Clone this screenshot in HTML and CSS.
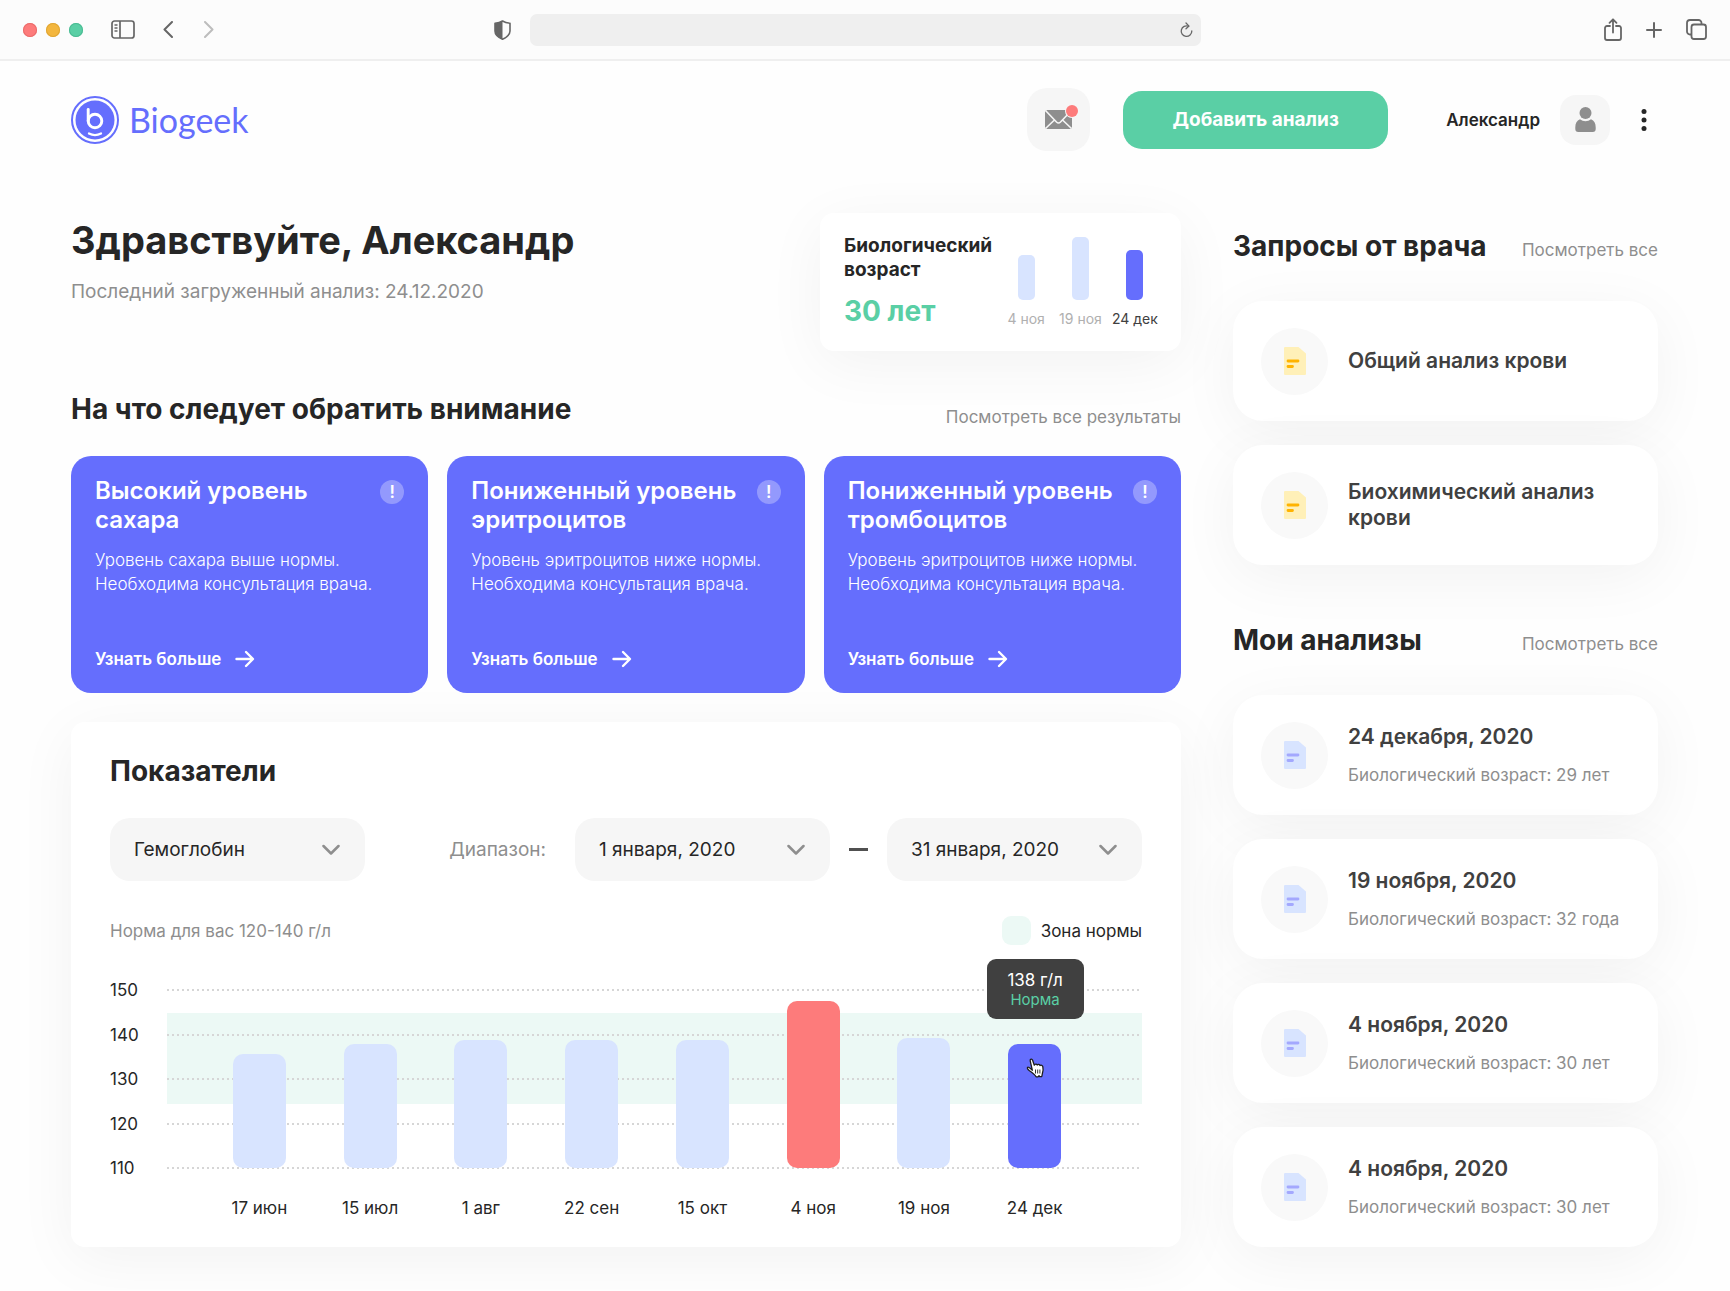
FILE: index.html
```html
<!DOCTYPE html>
<html lang="ru">
<head>
<meta charset="utf-8">
<meta name="viewport" content="width=device-width, initial-scale=1">
<title>Biogeek</title>
<link rel="stylesheet" href="styles.css">
</head>
<body>
<svg class="sprite" aria-hidden="true">
  <symbol id="i-doc" viewBox="0 0 22 28">
    <path class="doc-sheet" d="M1 0H14.500L22 6.500V27a1 1 0 0 1-1 1H1a1 1 0 0 1-1-1V1a1 1 0 0 1 1-1z"/>
    <path class="doc-lines" d="M4 14h10M4 19.500h4.500" fill="none" stroke-width="2.800" stroke-linecap="round"/>
  </symbol>
  <symbol id="i-arrow" viewBox="0 0 20 18">
    <path d="M1.500 9h16M11 2l7 7-7 7" fill="none" stroke="currentColor" stroke-width="2.400" stroke-linecap="round" stroke-linejoin="round"/>
  </symbol>
  <symbol id="i-down" viewBox="0 0 18 12">
    <path d="M1.500 2L9 9.500 16.500 2" fill="none" stroke="currentColor" stroke-width="2.500" stroke-linecap="round" stroke-linejoin="round"/>
  </symbol>
</svg>

<div class="browser">
  <div class="browser-side">
    <div class="lights"><span class="light red"></span><span class="light amber"></span><span class="light green"></span></div>
    <button class="tool sidebar-toggle" type="button" aria-label="Боковая панель">
      <svg width="24" height="19" viewBox="0 0 24 19" fill="none" stroke="currentColor" stroke-width="1.700"><rect x="1" y="1" width="22" height="17" rx="2.500"/><path d="M9 1v17"/><path d="M3.500 5h3M3.500 8h3M3.500 11h3" stroke-width="1.300"/></svg>
    </button>
    <button class="tool back" type="button" aria-label="Назад">
      <svg width="10" height="17" viewBox="0 0 10 17" fill="none" stroke="currentColor" stroke-width="2" stroke-linecap="round" stroke-linejoin="round"><path d="M9 1L1.500 8.500 9 16"/></svg>
    </button>
    <button class="tool forward" type="button" aria-label="Вперёд">
      <svg width="10" height="17" viewBox="0 0 10 17" fill="none" stroke="currentColor" stroke-width="2" stroke-linecap="round" stroke-linejoin="round"><path d="M1 1l7.500 7.500L1 16"/></svg>
    </button>
    <button class="tool shield" type="button" aria-label="Защита">
      <svg width="17" height="20" viewBox="0 0 17 20"><path d="M8.500 1c2 1.300 4.500 2 7.500 2.200V11c0 4-3.500 6.500-7.500 8.200C4.500 17.500 1 15 1 11V3.200C4 3 6.500 2.300 8.500 1z" fill="none" stroke="currentColor" stroke-width="1.600" stroke-linejoin="round"/><path d="M8.500 1v18.200C4.500 17.500 1 15 1 11V3.200C4 3 6.500 2.300 8.500 1z" fill="currentColor"/></svg>
    </button>
  </div>
  <div class="address">
    <input class="address-input" type="text" aria-label="Адрес">
    <button class="tool" type="button" aria-label="Обновить">
      <svg width="13" height="16" viewBox="0 0 13 16" fill="none" stroke="currentColor" stroke-width="1.300" stroke-linecap="round" stroke-linejoin="round"><path d="M8.500 4.200A5.300 5.300 0 1 0 11.800 9"/><path d="M6 1l3 3.100L6 6.800"/></svg>
    </button>
  </div>
  <div class="browser-side browser-end">
    <button class="tool" type="button" aria-label="Поделиться">
      <svg width="18" height="23" viewBox="0 0 18 23" fill="none" stroke="currentColor" stroke-width="1.800" stroke-linecap="round" stroke-linejoin="round"><path d="M6 8H3a2 2 0 0 0-2 2v10a2 2 0 0 0 2 2h12a2 2 0 0 0 2-2V10a2 2 0 0 0-2-2h-3"/><path d="M9 14.500V1.500M5.500 4.800L9 1.300l3.500 3.500"/></svg>
    </button>
    <button class="tool" type="button" aria-label="Новая вкладка">
      <svg width="16" height="16" viewBox="0 0 16 16" fill="none" stroke="currentColor" stroke-width="2" stroke-linecap="round"><path d="M8 1v14M1 8h14"/></svg>
    </button>
    <button class="tool" type="button" aria-label="Вкладки">
      <svg width="21" height="21" viewBox="0 0 21 21" fill="none" stroke="currentColor" stroke-width="1.800"><rect x="5.500" y="5.500" width="14.500" height="14.500" rx="2.500"/><path d="M5.500 15.500H4a3 3 0 0 1-3-3V4a3 3 0 0 1 3-3h8.500a3 3 0 0 1 3 3v1.500"/></svg>
    </button>
  </div>
</div>

<div class="page">
  <header class="header">
    <a class="brand" href="#">
      <svg width="48" height="48" viewBox="0 0 48 48" aria-hidden="true"><circle cx="24" cy="24" r="23" fill="none" stroke="#656efd" stroke-width="2"/><circle cx="24" cy="24" r="19.500" fill="#656efd"/><g fill="none" stroke="#fff" stroke-width="2.900" stroke-linecap="round"><path d="M17.200 13.500V25"/><circle cx="24" cy="25" r="6.800"/><path d="M18 37.500c3.500 1.800 8.500 1.800 12 0" stroke-width="2.300"/></g></svg>
      <span class="brand-name">Biogeek</span>
    </a>
    <button class="mail" type="button" aria-label="Сообщения">
      <svg width="41" height="35" viewBox="0 0 41 35" aria-hidden="true"><rect x="7" y="8" width="27" height="19" rx="2.500" fill="#8e8e8e"/><path d="M7.500 8.500l11 11.500q2 2 4 0l11-11.500M7.500 26.500l9.500-9M33.500 26.500l-9.500-9" fill="none" stroke="#f6f6f6" stroke-width="1.600"/><circle cx="34" cy="9" r="7" fill="#f6f6f6"/><circle cx="34" cy="9" r="6" fill="#fd7b7b"/></svg>
    </button>
    <button class="add" type="button">Добавить анализ</button>
    <span class="user-name">Александр</span>
    <a class="avatar" href="#" aria-label="Профиль">
      <svg width="21" height="25" viewBox="0 0 21 25" fill="#8e8e8e" aria-hidden="true"><circle cx="10.500" cy="6" r="6"/><path d="M5 12.300c3 2.600 8 2.600 11 0 3.200 1.200 4.700 4.200 4.700 8V22a3 3 0 0 1-3 3H3.300a3 3 0 0 1-3-3v-1.700c0-3.800 1.500-6.800 4.700-8z"/></svg>
    </a>
    <button class="more" type="button" aria-label="Меню">
      <svg width="6" height="22" viewBox="0 0 6 22" fill="#262626" aria-hidden="true"><circle cx="3" cy="2.600" r="2.500"/><circle cx="3" cy="11" r="2.500"/><circle cx="3" cy="19.400" r="2.500"/></svg>
    </button>
  </header>

  <div class="columns">
    <main class="main">
      <section class="intro">
        <div class="greeting">
          <h1>Здравствуйте, Александр</h1>
          <p>Последний загруженный анализ: 24.12.2020</p>
        </div>
        <div class="age-card">
          <div class="age-info">
            <h3>Биологический возраст</h3>
            <strong class="age-value">30 лет</strong>
          </div>
          <ul class="age-chart">
            <li><span class="age-bar" style="height:45px"></span><span>4 ноя</span></li>
            <li><span class="age-bar" style="height:63px"></span><span>19 ноя</span></li>
            <li class="current"><span class="age-bar" style="height:50px"></span><span>24 дек</span></li>
          </ul>
        </div>
      </section>

      <section class="attention">
        <div class="section-head">
          <h2>На что следует обратить внимание</h2>
          <a class="see-all" href="#">Посмотреть все результаты</a>
        </div>
        <div class="alerts">
          <article class="alert">
            <div class="alert-head"><h3>Высокий уровень сахара</h3><span class="alert-mark">!</span></div>
            <p>Уровень сахара выше нормы. Необходима консультация врача.</p>
            <a class="alert-link" href="#">Узнать больше <svg width="20" height="18"><use href="#i-arrow"/></svg></a>
          </article>
          <article class="alert">
            <div class="alert-head"><h3>Пониженный уровень эритроцитов</h3><span class="alert-mark">!</span></div>
            <p>Уровень эритроцитов ниже нормы. Необходима консультация врача.</p>
            <a class="alert-link" href="#">Узнать больше <svg width="20" height="18"><use href="#i-arrow"/></svg></a>
          </article>
          <article class="alert">
            <div class="alert-head"><h3>Пониженный уровень тромбоцитов</h3><span class="alert-mark">!</span></div>
            <p>Уровень эритроцитов ниже нормы. Необходима консультация врача.</p>
            <a class="alert-link" href="#">Узнать больше <svg width="20" height="18"><use href="#i-arrow"/></svg></a>
          </article>
        </div>
      </section>

      <section class="metrics">
        <h2>Показатели</h2>
        <form class="filters">
          <div class="picker">
            <select aria-label="Показатель"><option>Гемоглобин</option></select>
            <svg width="18" height="12"><use href="#i-down"/></svg>
          </div>
          <label class="range-label" for="from">Диапазон:</label>
          <div class="picker">
            <select id="from"><option>1 января, 2020</option></select>
            <svg width="18" height="12"><use href="#i-down"/></svg>
          </div>
          <span class="range-dash"></span>
          <div class="picker">
            <select aria-label="Конец диапазона"><option>31 января, 2020</option></select>
            <svg width="18" height="12"><use href="#i-down"/></svg>
          </div>
        </form>
        <div class="norm">
          <span class="norm-text">Норма для вас 120-140 г/л</span>
          <span class="norm-swatch"></span>
          <span>Зона нормы</span>
        </div>
        <div class="chart">
          <div class="zone"></div>
          <ul class="scale">
            <li>150</li><li>140</li><li>130</li><li>120</li><li>110</li>
          </ul>
          <div class="bars">
            <div class="bar" style="height:64%"></div>
            <div class="bar" style="height:69.5%"></div>
            <div class="bar" style="height:72%"></div>
            <div class="bar" style="height:72%"></div>
            <div class="bar" style="height:72%"></div>
            <div class="bar high" style="height:94%"></div>
            <div class="bar" style="height:73%"></div>
            <div class="bar active" style="height:69.5%">
              <div class="tooltip"><span>138 г/л</span><span class="tooltip-note">Норма</span></div>
              <svg class="pointer" width="19" height="20" viewBox="0 0 19 20" aria-hidden="true"><path d="M6.300 12.200L4.200 2.800C3.900 1 6 .5 6.600 2.200L8.300 7.200C8.800 5.800 10.700 5.700 11.200 7c.8-1 2.400-.8 2.800.6 1-.8 2.500-.3 2.800 1.100.5 2.300.7 4.500-.4 6.700l-.6 3.100-2 .2-.8-.9-1 1.100-1.900-.1C9 16.500 5.500 14 3.500 12.700 1.800 11.500.8 10 1.700 9.300c1-.8 2.300.6 4.600 2.900z" fill="#fff" stroke="#1c1c1c" stroke-width="1.300" stroke-linejoin="round"/><path d="M9.500 11.500v4M11.700 11.500v4M13.900 11.500v4" stroke="#1c1c1c" stroke-width=".9"/></svg>
            </div>
          </div>
          <ul class="dates">
            <li>17 июн</li><li>15 июл</li><li>1 авг</li><li>22 сен</li><li>15 окт</li><li>4 ноя</li><li>19 ноя</li><li>24 дек</li>
          </ul>
        </div>
      </section>
    </main>

    <aside class="aside">
      <section>
        <div class="section-head">
          <h2>Запросы от врача</h2>
          <a class="see-all" href="#">Посмотреть все</a>
        </div>
        <div class="docs">
          <a class="doc request" href="#"><span class="doc-icon"><svg width="22" height="28"><use href="#i-doc"/></svg></span><span class="doc-title">Общий анализ крови</span></a>
          <a class="doc request" href="#"><span class="doc-icon"><svg width="22" height="28"><use href="#i-doc"/></svg></span><span class="doc-title">Биохимический анализ крови</span></a>
        </div>
      </section>
      <section>
        <div class="section-head">
          <h2>Мои анализы</h2>
          <a class="see-all" href="#">Посмотреть все</a>
        </div>
        <div class="docs">
          <a class="doc" href="#"><span class="doc-icon"><svg width="22" height="28"><use href="#i-doc"/></svg></span><span class="doc-text"><span class="doc-title">24 декабря, 2020</span><span class="doc-note">Биологический возраст: 29 лет</span></span></a>
          <a class="doc" href="#"><span class="doc-icon"><svg width="22" height="28"><use href="#i-doc"/></svg></span><span class="doc-text"><span class="doc-title">19 ноября, 2020</span><span class="doc-note">Биологический возраст: 32 года</span></span></a>
          <a class="doc" href="#"><span class="doc-icon"><svg width="22" height="28"><use href="#i-doc"/></svg></span><span class="doc-text"><span class="doc-title">4 ноября, 2020</span><span class="doc-note">Биологический возраст: 30 лет</span></span></a>
          <a class="doc" href="#"><span class="doc-icon"><svg width="22" height="28"><use href="#i-doc"/></svg></span><span class="doc-text"><span class="doc-title">4 ноября, 2020</span><span class="doc-note">Биологический возраст: 30 лет</span></span></a>
        </div>
      </section>
    </aside>
  </div>
</div>
</body>
</html>
```
FILE: styles.css
```css
:root {
  --ink: #262626;
  --muted: #8e8e8e;
  --blue: #656efd;
  --pale: #d8e4ff;
  --green: #5acfa5;
  --red: #fd7b7b;
  --mint: #ecf9f5;
  --grey: #f6f6f6;
  --shadow: 0 12px 60px rgba(0, 0, 0, .05);
}

* { box-sizing: border-box; }

body {
  margin: 0;
  background: #fefefe;
  color: var(--ink);
  font: 400 17px/24px Inter, "Liberation Sans", sans-serif;
}

h1, h2, h3, p, ul { margin: 0; padding: 0; }
ul { list-style: none; }
a { color: inherit; text-decoration: none; }
button { border: 0; padding: 0; background: none; color: inherit; font: inherit; cursor: pointer; }
svg { display: block; flex: none; }
.sprite { position: absolute; width: 0; height: 0; }

h1 { font-size: 38px; line-height: 48px; font-weight: 700; }
h2 { font-size: 28px; line-height: 36px; font-weight: 700; }

/* Browser bar */
.browser {
  display: grid;
  grid-template-columns: 1fr minmax(0, 671px) 1fr;
  align-items: center;
  height: 61px;
  padding: 0 23px;
  border-bottom: 2px solid #efefef;
  background: #fcfcfc;
}
.browser-side { display: flex; align-items: center; color: #666; }
.browser-end { justify-content: flex-end; gap: 24px; }
.lights { display: flex; gap: 9px; margin-right: 28px; }
.light { width: 14px; height: 14px; border-radius: 50%; }
.light.red { background: var(--red); box-shadow: inset 0 0 0 1px #ea6c6b; }
.light.amber { background: #f3b63e; box-shadow: inset 0 0 0 1px #e0a634; }
.light.green { background: var(--green); box-shadow: inset 0 0 0 1px #4bbb93; }
.back { margin-left: 28px; }
.forward { margin-left: 31px; color: #bdbdbd; }
.shield { margin-left: auto; margin-right: 19px; }
.address {
  display: flex;
  align-items: center;
  height: 32px;
  padding-right: 8px;
  border-radius: 7px;
  background: #efefef;
  color: #666;
}
.address-input { flex: 1; min-width: 0; border: 0; background: none; font: inherit; }

/* Header */
.page { padding: 27px 72px 43px 71px; }
.header { display: flex; align-items: center; min-height: 63px; }
.brand { display: flex; align-items: center; gap: 10px; margin-right: auto; color: var(--blue); }
.brand-name { font: 400 34px/40px Lato, sans-serif; }
.mail, .avatar { display: grid; place-items: center; background: var(--grey); }
.mail { width: 63px; height: 63px; border-radius: 20px; }
.add {
  height: 58px;
  width: 265px;
  margin: 0 58px 0 33px;
  border-radius: 19px;
  background: var(--green);
  color: #fff;
  font-size: 19px;
  font-weight: 700;
}
.user-name { font-weight: 600; }
.avatar { width: 50px; height: 50px; margin: 0 20px; border-radius: 16px; }
.more { display: grid; place-items: center; width: 28px; height: 40px; }

/* Columns */
.columns {
  display: grid;
  grid-template-columns: minmax(0, 1110fr) minmax(0, 425fr);
  gap: 52px;
  margin-top: 62px;
}
.main { display: flex; flex-direction: column; }
.aside { display: flex; flex-direction: column; gap: 57px; padding-top: 15px; }
.section-head { display: flex; align-items: baseline; justify-content: space-between; }
.see-all { color: var(--muted); line-height: 20px; }

/* Greeting and biological age */
.intro { display: flex; justify-content: space-between; }
.greeting { padding-top: 3px; }
.greeting p { margin-top: 16px; color: var(--muted); font-size: 19px; }
.age-card {
  display: flex;
  width: 361px;
  min-height: 138px;
  padding: 21px 19px 19px 24px;
  border-radius: 14px;
  background: #fff;
  box-shadow: var(--shadow);
}
.age-info { width: 155px; }
.age-info h3 { font-size: 19px; line-height: 24px; font-weight: 700; }
.age-value { display: block; margin-top: 11px; color: var(--green); font-size: 28px; line-height: 36px; font-weight: 700; }
.age-chart { flex: 1; display: grid; grid-template-columns: repeat(3, 1fr); height: 95px; align-items: end; }
.age-chart li { display: flex; flex-direction: column; align-items: center; gap: 9px; color: #b0b0b0; font-size: 14px; line-height: 20px; white-space: nowrap; }
.age-bar { width: 17px; border-radius: 5px; background: var(--pale); }
.age-chart .current { color: #404040; }
.current .age-bar { background: var(--blue); }

/* Alerts */
.attention { margin-top: 40px; }
.attention .section-head { align-items: flex-end; }
.alerts { display: grid; grid-template-columns: repeat(3, minmax(0, 1fr)); gap: 19px; margin-top: 29px; }
.alert {
  display: flex;
  flex-direction: column;
  min-height: 237px;
  padding: 20px 24px 22px;
  border-radius: 20px;
  background: var(--blue);
  color: #fff;
}
.alert-head { display: flex; justify-content: space-between; align-items: flex-start; gap: 16px; }
.alert-head h3 { font-size: 24px; line-height: 29px; font-weight: 600; }
.alert-mark {
  flex: none;
  width: 24px;
  margin-top: 4px;
  border-radius: 50%;
  background: rgba(255, 255, 255, .3);
  font-weight: 600;
  text-align: center;
}
.alert p { margin-top: 14px; font-weight: 300; }
.alert-link { display: flex; align-items: center; gap: 14px; margin-top: auto; font-weight: 600; }

/* Metrics */
.metrics {
  margin-top: 29px;
  padding: 31px 39px 27px;
  border-radius: 14px;
  background: #fff;
  box-shadow: var(--shadow);
}
.filters { display: flex; align-items: center; margin-top: 29px; font-size: 19px; }
.picker { position: relative; width: 255px; }
.picker select {
  appearance: none;
  width: 100%;
  height: 63px;
  padding: 1px 48px 0 24px;
  border: 0;
  border-radius: 20px;
  background: var(--grey);
  color: var(--ink);
  font: inherit;
}
.picker svg { position: absolute; right: 25px; top: 26px; color: var(--muted); pointer-events: none; }
.range-label { margin: 0 29px 0 auto; color: var(--muted); }
.range-dash { width: 19px; height: 3px; margin: 0 19px; background: #505050; }
.norm { display: flex; align-items: center; gap: 10px; margin-top: 35px; }
.norm-text { margin-right: auto; color: var(--muted); }
.norm-swatch { width: 29px; height: 29px; border-radius: 9px; background: var(--mint); }

.chart { display: grid; grid-template-columns: 57px 1fr; grid-template-rows: 198px auto; margin-top: 35px; }
.zone { grid-area: 1 / 2; margin: 33px 0 74px; background: var(--mint); }
.scale { grid-area: 1 / 1 / 2 / 3; display: flex; flex-direction: column; justify-content: space-between; }
.scale li { display: grid; grid-template-columns: 57px 1fr; align-items: center; line-height: 20px; }
.scale li::after { content: ""; height: 2px; background: repeating-linear-gradient(90deg, #d6d6d6 0 2px, transparent 2px 5px); }
.bars, .dates { display: grid; grid-template-columns: repeat(8, 1fr); padding: 0 52px 0 37px; justify-items: center; }
.bars { grid-area: 1 / 2; align-items: end; margin: 10px 0; }
.bar { position: relative; width: 53px; border-radius: 10px; background: var(--pale); }
.bar.high { background: var(--red); }
.bar.active { background: var(--blue); }
.dates { grid-area: 2 / 2; margin-top: 18px; white-space: nowrap; }
.tooltip {
  position: absolute;
  left: 50%;
  bottom: calc(100% + 25px);
  display: flex;
  flex-direction: column;
  align-items: center;
  width: 97px;
  margin-left: -48px;
  padding: 11px 0 9px;
  border-radius: 9px;
  background: #404040;
  color: #fff;
  line-height: 20px;
}
.tooltip-note { color: var(--green); font-size: 15px; }
.pointer { position: absolute; left: 18px; top: 14px; }

/* Documents */
.docs { display: grid; gap: 24px; margin-top: 37px; }
.doc {
  --sheet: var(--pale);
  --lines: #a3a8fe;
  display: flex;
  align-items: center;
  gap: 20px;
  min-height: 120px;
  padding: 20px 28px;
  border-radius: 30px;
  background: #fff;
  box-shadow: var(--shadow);
}
.doc.request { --sheet: #fff0b8; --lines: #ffb300; }
.doc-icon { flex: none; display: grid; place-items: center; width: 67px; height: 67px; border-radius: 50%; background: #f9f9f9; }
.doc-text { display: grid; gap: 13px; }
.doc-title { color: #404040; font-size: 21px; line-height: 26px; font-weight: 600; }
.doc-note { color: var(--muted); }
.doc-sheet { fill: var(--sheet); }
.doc-lines { stroke: var(--lines); }
```
